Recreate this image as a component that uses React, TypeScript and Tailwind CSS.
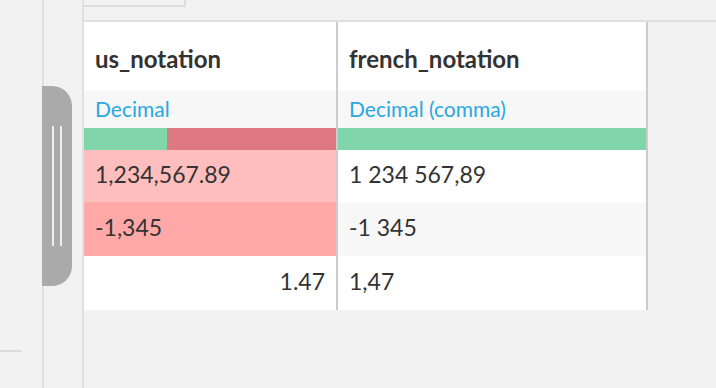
const columns = [
  {
    name: "us_notation",
    type: "Decimal",
    validPct: 33,
    cells: [
      { value: "1,234,567.89", bg: "bg-[#ffbebe]", right: false },
      { value: "-1,345", bg: "bg-[#ffa8a8]", right: false },
      { value: "1.47", bg: "bg-white", right: true },
    ],
    width: "w-[254px]",
  },
  {
    name: "french_notation",
    type: "Decimal (comma)",
    validPct: 100,
    cells: [
      { value: "1 234 567,89", bg: "bg-white", right: false },
      { value: "-1 345", bg: "bg-[#f7f7f7]", right: false },
      { value: "1,47", bg: "bg-white", right: false },
    ],
    width: "w-[310px]",
  },
];

const rowHeights = ["h-[52px]", "h-[54px]", "h-[54px]"];

function Column({ col }: { col: (typeof columns)[number] }) {
  return (
    <div className={`flex flex-col border-r-2 border-[#cccccc] ${col.width}`}>
      <div className="flex h-[68px] items-center bg-white px-[11px] pt-[5px] text-[24px] font-bold text-[#333]">
        {col.name}
      </div>
      <div className="flex h-[38px] items-center bg-[#f7f7f7] px-[11px] text-[21px] text-[#29a8df]">
        {col.type}
      </div>
      <div className="flex h-[22px] bg-[#de7882]">
        <div className="h-full bg-[#80d5aa]" style={{ width: `${col.validPct}%` }} />
      </div>
      {col.cells.map((cell, i) => (
        <div
          key={i}
          className={`flex items-center px-[11px] pb-[3px] text-[23px] text-[#333] ${rowHeights[i]} ${cell.bg} ${
            cell.right ? "justify-end" : "justify-start"
          }`}
        >
          {cell.value}
        </div>
      ))}
    </div>
  );
}

export default function App() {
  return (
    <div
      className="relative flex h-[388px] w-[716px] overflow-hidden bg-[#f2f2f2]"
      style={{ fontFamily: "Lato, 'Open Sans', sans-serif" }}
    >
      <div className="w-[42px] shrink-0">
        <div className="mt-[350px] h-[2px] w-[22px] bg-[#dcdcdc]" />
      </div>
      <div className="w-[40px] shrink-0 border-l-2 border-[#e0e0e0]" />
      <div className="flex flex-1 flex-col border-l-2 border-[#e0e0e0]">
        <div className="h-[20px]">
          <div className="h-[7px] w-[102px] border-b-2 border-r-2 border-[#dcdcdc]" />
        </div>
        <div className="flex border-t-2 border-[#e0e0e0]">
          {columns.map((col) => (
            <Column key={col.name} col={col} />
          ))}
        </div>
      </div>

      <div className="absolute left-[42px] top-[86px] h-[200px] w-[30px] rounded-r-[20px] bg-[#aaaaaa]">
        <div className="ml-[10px] mt-[40px] flex gap-[6px]">
          <div className="h-[120px] w-[2px] bg-[#eeeeee]" />
          <div className="h-[120px] w-[2px] bg-[#eeeeee]" />
        </div>
      </div>
    </div>
  );
}
